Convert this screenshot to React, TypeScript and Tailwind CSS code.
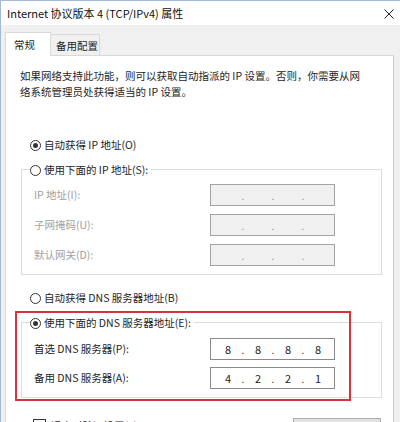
import React from 'react';

const Radio = ({ checked }: { checked?: boolean }) => (
  <span className="w-[11px] h-[11px] rounded-full border border-[#333] bg-white flex items-center justify-center shrink-0">
    {checked && <span className="w-[5px] h-[5px] rounded-full bg-[#333]" />}
  </span>
);

const IpBox = ({ values, disabled }: { values: string[]; disabled?: boolean }) => (
  <div
    className={
      disabled
        ? 'w-[125px] h-[22px] border border-[#a3a3a3] bg-[#f0f0f0] flex items-center pl-[5px] text-[#8c8c8c]'
        : 'w-[125px] h-[22px] border border-[#8a8a8a] bg-white flex items-center pl-[5px] text-[#222]'
    }
  >
    {values.map((v, i) => (
      <React.Fragment key={i}>
        <span className="w-[24px] text-center text-[11px]">{v}</span>
        {i < 3 && <span className="w-[6px] text-center text-[10px]">.</span>}
      </React.Fragment>
    ))}
  </div>
);

const Row = ({ label, children, disabled }: { label: string; children: React.ReactNode; disabled?: boolean }) => (
  <div className="h-[22px] flex items-center">
    <span className={disabled ? 'w-[188px] pl-[12px] text-[#a0a0a0]' : 'w-[188px] pl-[12px]'}>{label}</span>
    {children}
  </div>
);

const App = () => {
  const blank = ['', '', '', ''];
  return (
    <div className="relative w-[400px] h-[422px] overflow-hidden bg-[#f0f0f0] border-t border-l border-[#a4bad4] font-['Noto_Sans_CJK_SC',sans-serif] text-[10.5px] text-[#1e1e1e]">
      {/* title bar */}
      <div className="h-[24px] bg-white flex items-center justify-between pl-[6px] pr-[6px]">
        <span className="text-[11px] text-[#111]">Internet 协议版本 4 (TCP/IPv4) 属性</span>
        <svg width="10" height="10" viewBox="0 0 10 10" className="mt-[1px]">
          <path d="M0.5 0.5 L9.5 9.5 M9.5 0.5 L0.5 9.5" stroke="#222" strokeWidth="1" />
        </svg>
      </div>

      {/* tabs */}
      <div className="pt-[7px] pl-[4px] flex items-end">
        <div className="relative z-10 -mb-px w-[46px] h-[24px] bg-white border border-b-0 border-[#d9d9d9] pl-[8px] pt-[4px]">常规</div>
        <div className="w-[49px] h-[21px] border border-l-0 border-b-0 border-[#d9d9d9] pl-[5px] pt-[3px]">备用配置</div>
      </div>

      {/* panel */}
      <div className="ml-[4px] w-[389px] h-[400px] bg-white border border-[#d9d9d9] border-r-[#bcd0e4]">
        <p className="mt-[12px] pl-[14px] leading-[16px] whitespace-nowrap">
          如果网络支持此功能，则可以获取自动指派的 IP 设置。否则，你需要从网
          <br />
          络系统管理员处获得适当的 IP 设置。
        </p>

        <div className="mt-[35px] pl-[24px] h-[20px] flex items-center gap-[3px]">
          <Radio checked />
          <span>自动获得 IP 地址(O)</span>
        </div>

        <div className="mt-[14px] ml-[15px] w-[361px] border border-[#dcdcdc] pb-[8px]">
          <div className="-mt-[10px] ml-[8px] pr-[3px] h-[20px] w-fit bg-white flex items-center gap-[3px]">
            <Radio />
            <span>使用下面的 IP 地址(S):</span>
          </div>
          <div className="mt-[4px] flex flex-col gap-[8px]">
            <Row label="IP 地址(I):" disabled>
              <IpBox values={blank} disabled />
            </Row>
            <Row label="子网掩码(U):" disabled>
              <IpBox values={blank} disabled />
            </Row>
            <Row label="默认网关(D):" disabled>
              <IpBox values={blank} disabled />
            </Row>
          </div>
        </div>

        <div className="mt-[13px] pl-[24px] h-[20px] flex items-center gap-[3px]">
          <Radio />
          <span>自动获得 DNS 服务器地址(B)</span>
        </div>

        <div className="mt-[14px] ml-[15px] w-[361px] border border-[#dcdcdc] pb-[8px]">
          <div className="-mt-[10px] ml-[8px] pr-[3px] h-[20px] w-fit bg-white flex items-center gap-[3px]">
            <Radio checked />
            <span>使用下面的 DNS 服务器地址(E):</span>
          </div>
          <div className="mt-[5px] flex flex-col gap-[7px]">
            <Row label="首选 DNS 服务器(P):">
              <IpBox values={['8', '8', '8', '8']} />
            </Row>
            <Row label="备用 DNS 服务器(A):">
              <IpBox values={['4', '2', '2', '1']} />
            </Row>
          </div>
        </div>

        <div className="mt-[20px] pl-[27px] pr-[12px] flex items-start justify-between">
          <div className="flex items-center gap-[5px]">
            <span className="w-[13px] h-[13px] border border-[#333] bg-white" />
            <span>退出时验证设置(L)</span>
          </div>
          <div className="w-[88px] h-[22px] border border-[#adadad] bg-[#e1e1e1] flex items-center justify-center">高级(V)...</div>
        </div>
      </div>

      {/* red highlight */}
      <div className="absolute left-[14px] top-[310px] w-[336px] h-[90px] border-2 border-[#d7333a]" />
    </div>
  );
};

export default App;
